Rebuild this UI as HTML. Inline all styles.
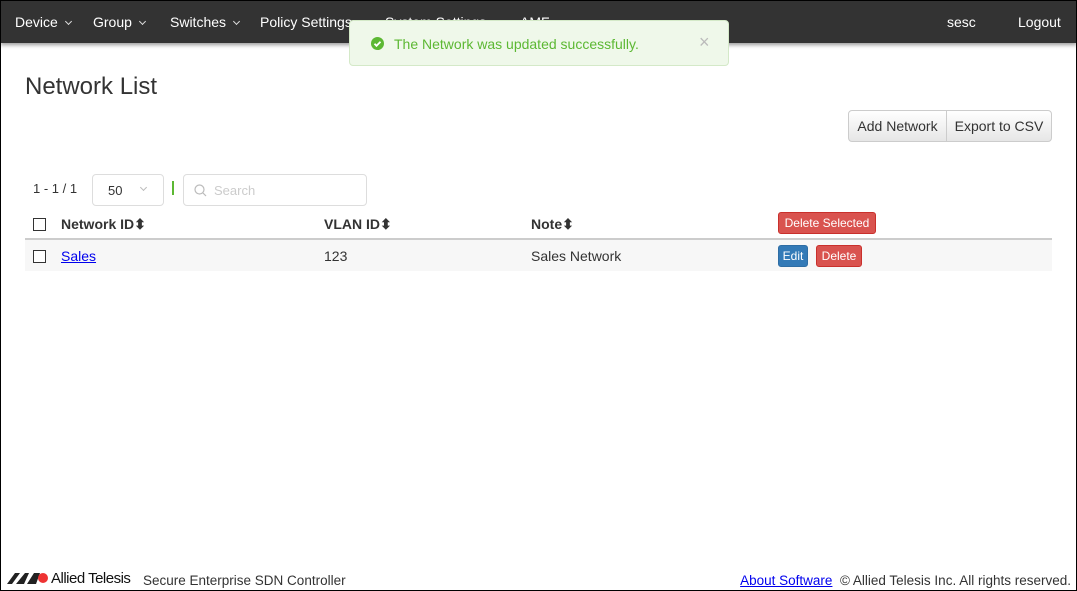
<!DOCTYPE html>
<html><head><style>
*{box-sizing:border-box}
body{margin:0;width:1077px;height:591px;overflow:hidden;font-family:"Liberation Sans",sans-serif;font-size:14px;color:#333;background:#fff}
.frame{position:absolute;left:0;top:0;width:1077px;height:591px;border:1px solid #000;pointer-events:none}
.nav{position:absolute;left:0;top:0;width:1077px;height:43px;background:#333;box-shadow:0 2px 4px rgba(0,0,0,.4);color:#fff}
.nav span{position:absolute;top:14px;font-size:14px;white-space:nowrap}
.car{display:inline-block;width:5px;height:5px;border-right:1px solid #ddd;border-bottom:1px solid #ddd;transform:rotate(45deg);margin-left:8px;vertical-align:3px}
.toast{position:absolute;left:349px;top:20px;width:380px;height:46px;background:#eff8ea;border:1px solid #d4e9c8;border-radius:4px;color:#5cb833;font-size:14px}
.abs{position:absolute;white-space:nowrap}
.btn{position:absolute;border:1px solid #ccc;background:linear-gradient(#fff,#e6e6e6);color:#333;font-size:14px;text-align:center;line-height:30px;height:32px}
.cb{position:absolute;width:13px;height:13px;border:1px solid #333;background:#fff}
.red{position:absolute;background:#d9534f;color:#fff;border-radius:3px;font-size:12px;text-align:center;border:1px solid #c9302c}
.b{font-weight:bold}
</style></head><body>
<div class="nav">
<span style="left:15px">Device<i class="car"></i></span>
<span style="left:93px">Group<i class="car"></i></span>
<span style="left:170px">Switches<i class="car"></i></span>
<span style="left:260px">Policy Settings</span>
<span style="left:385px">System Settings</span>
<span style="left:520px">AMF</span>
<span style="left:947px">sesc</span>
<span style="left:1018px">Logout</span>
</div>
<div class="toast">
<svg class="abs" style="left:21px;top:16px" width="13" height="13" viewBox="0 0 13 13"><circle cx="6.5" cy="6.5" r="6.5" fill="#5cb833"/><path d="M3.5 6.8l2 2 4-4" stroke="#fff" stroke-width="1.8" fill="none"/></svg>
<span class="abs" style="left:44px;top:15px">The Network was updated successfully.</span>
<span class="abs" style="left:349px;top:11px;color:#bbb;font-size:18px">×</span>
</div>
<div class="abs" style="left:25px;top:73px;font-size:24px">Network List</div>
<div class="btn" style="left:848px;top:110px;width:99px;border-radius:4px 0 0 4px">Add Network</div>
<div class="btn" style="left:946px;top:110px;width:106px;border-radius:0 4px 4px 0">Export to CSV</div>
<div class="abs" style="left:33px;top:181px;font-size:13px;color:#333">1 - 1 / 1</div>
<div class="abs" style="left:92px;top:174px;width:72px;height:32px;border:1px solid #ddd;border-radius:4px;font-size:13px"><span class="abs" style="left:15px;top:8px">50</span><i class="car" style="position:absolute;left:40px;top:10px;border-color:#bbb"></i></div>
<div class="abs" style="left:172px;top:181px;width:2px;height:14px;background:#5cb833"></div>
<div class="abs" style="left:183px;top:174px;width:184px;height:32px;border:1px solid #ddd;border-radius:4px">
<svg class="abs" style="left:10px;top:9px" width="13" height="13" viewBox="0 0 13 13"><circle cx="5.5" cy="5.5" r="4.5" stroke="#bbb" fill="none" stroke-width="1.2"/><path d="M9 9l3 3" stroke="#bbb" stroke-width="1.2"/></svg>
<span class="abs" style="left:30px;top:8px;color:#ccc;font-size:13px">Search</span></div>
<div class="cb" style="left:33px;top:218px"></div>
<div class="abs b" style="left:61px;top:216px">Network ID&#x2B0D;</div>
<div class="abs b" style="left:324px;top:216px">VLAN ID&#x2B0D;</div>
<div class="abs b" style="left:531px;top:216px">Note&#x2B0D;</div>
<div class="red" style="left:778px;top:212px;width:98px;height:22px;line-height:20px">Delete Selected</div>
<div class="abs" style="left:25px;top:238px;width:1027px;height:2px;background:#ccc"></div>
<div class="abs" style="left:25px;top:240px;width:1027px;height:31px;background:#f7f7f7"></div>
<div class="cb" style="left:33px;top:250px"></div>
<div class="abs" style="left:61px;top:248px;color:#00e;text-decoration:underline">Sales</div>
<div class="abs" style="left:324px;top:248px">123</div>
<div class="abs" style="left:531px;top:248px">Sales Network</div>
<div class="red" style="left:778px;top:245px;width:30px;height:22px;line-height:20px;background:#337ab7;border-color:#2e6da4">Edit</div>
<div class="red" style="left:816px;top:245px;width:46px;height:22px;line-height:20px">Delete</div>
<svg class="abs" style="left:7px;top:572px" width="42" height="12" viewBox="0 0 42 12"><path d="M0 12L8 1h5L5 12z M9 12l9-11h4l-5 11z M20 12l7-11h6l-4 11z" fill="#222"/><circle cx="36" cy="6" r="5" fill="#e33"/></svg>
<div class="abs" style="left:51px;top:570px;font-size:15px;color:#111;letter-spacing:-0.5px">Allied Telesis</div>
<div class="abs" style="left:143px;top:573px;font-size:13.5px">Secure Enterprise SDN Controller</div>
<div class="abs" style="right:6px;top:573px;font-size:13.5px"><span style="color:#00e;text-decoration:underline">About Software</span>&nbsp; © Allied Telesis Inc. All rights reserved.</div>
<div class="frame"></div>
</body></html>
